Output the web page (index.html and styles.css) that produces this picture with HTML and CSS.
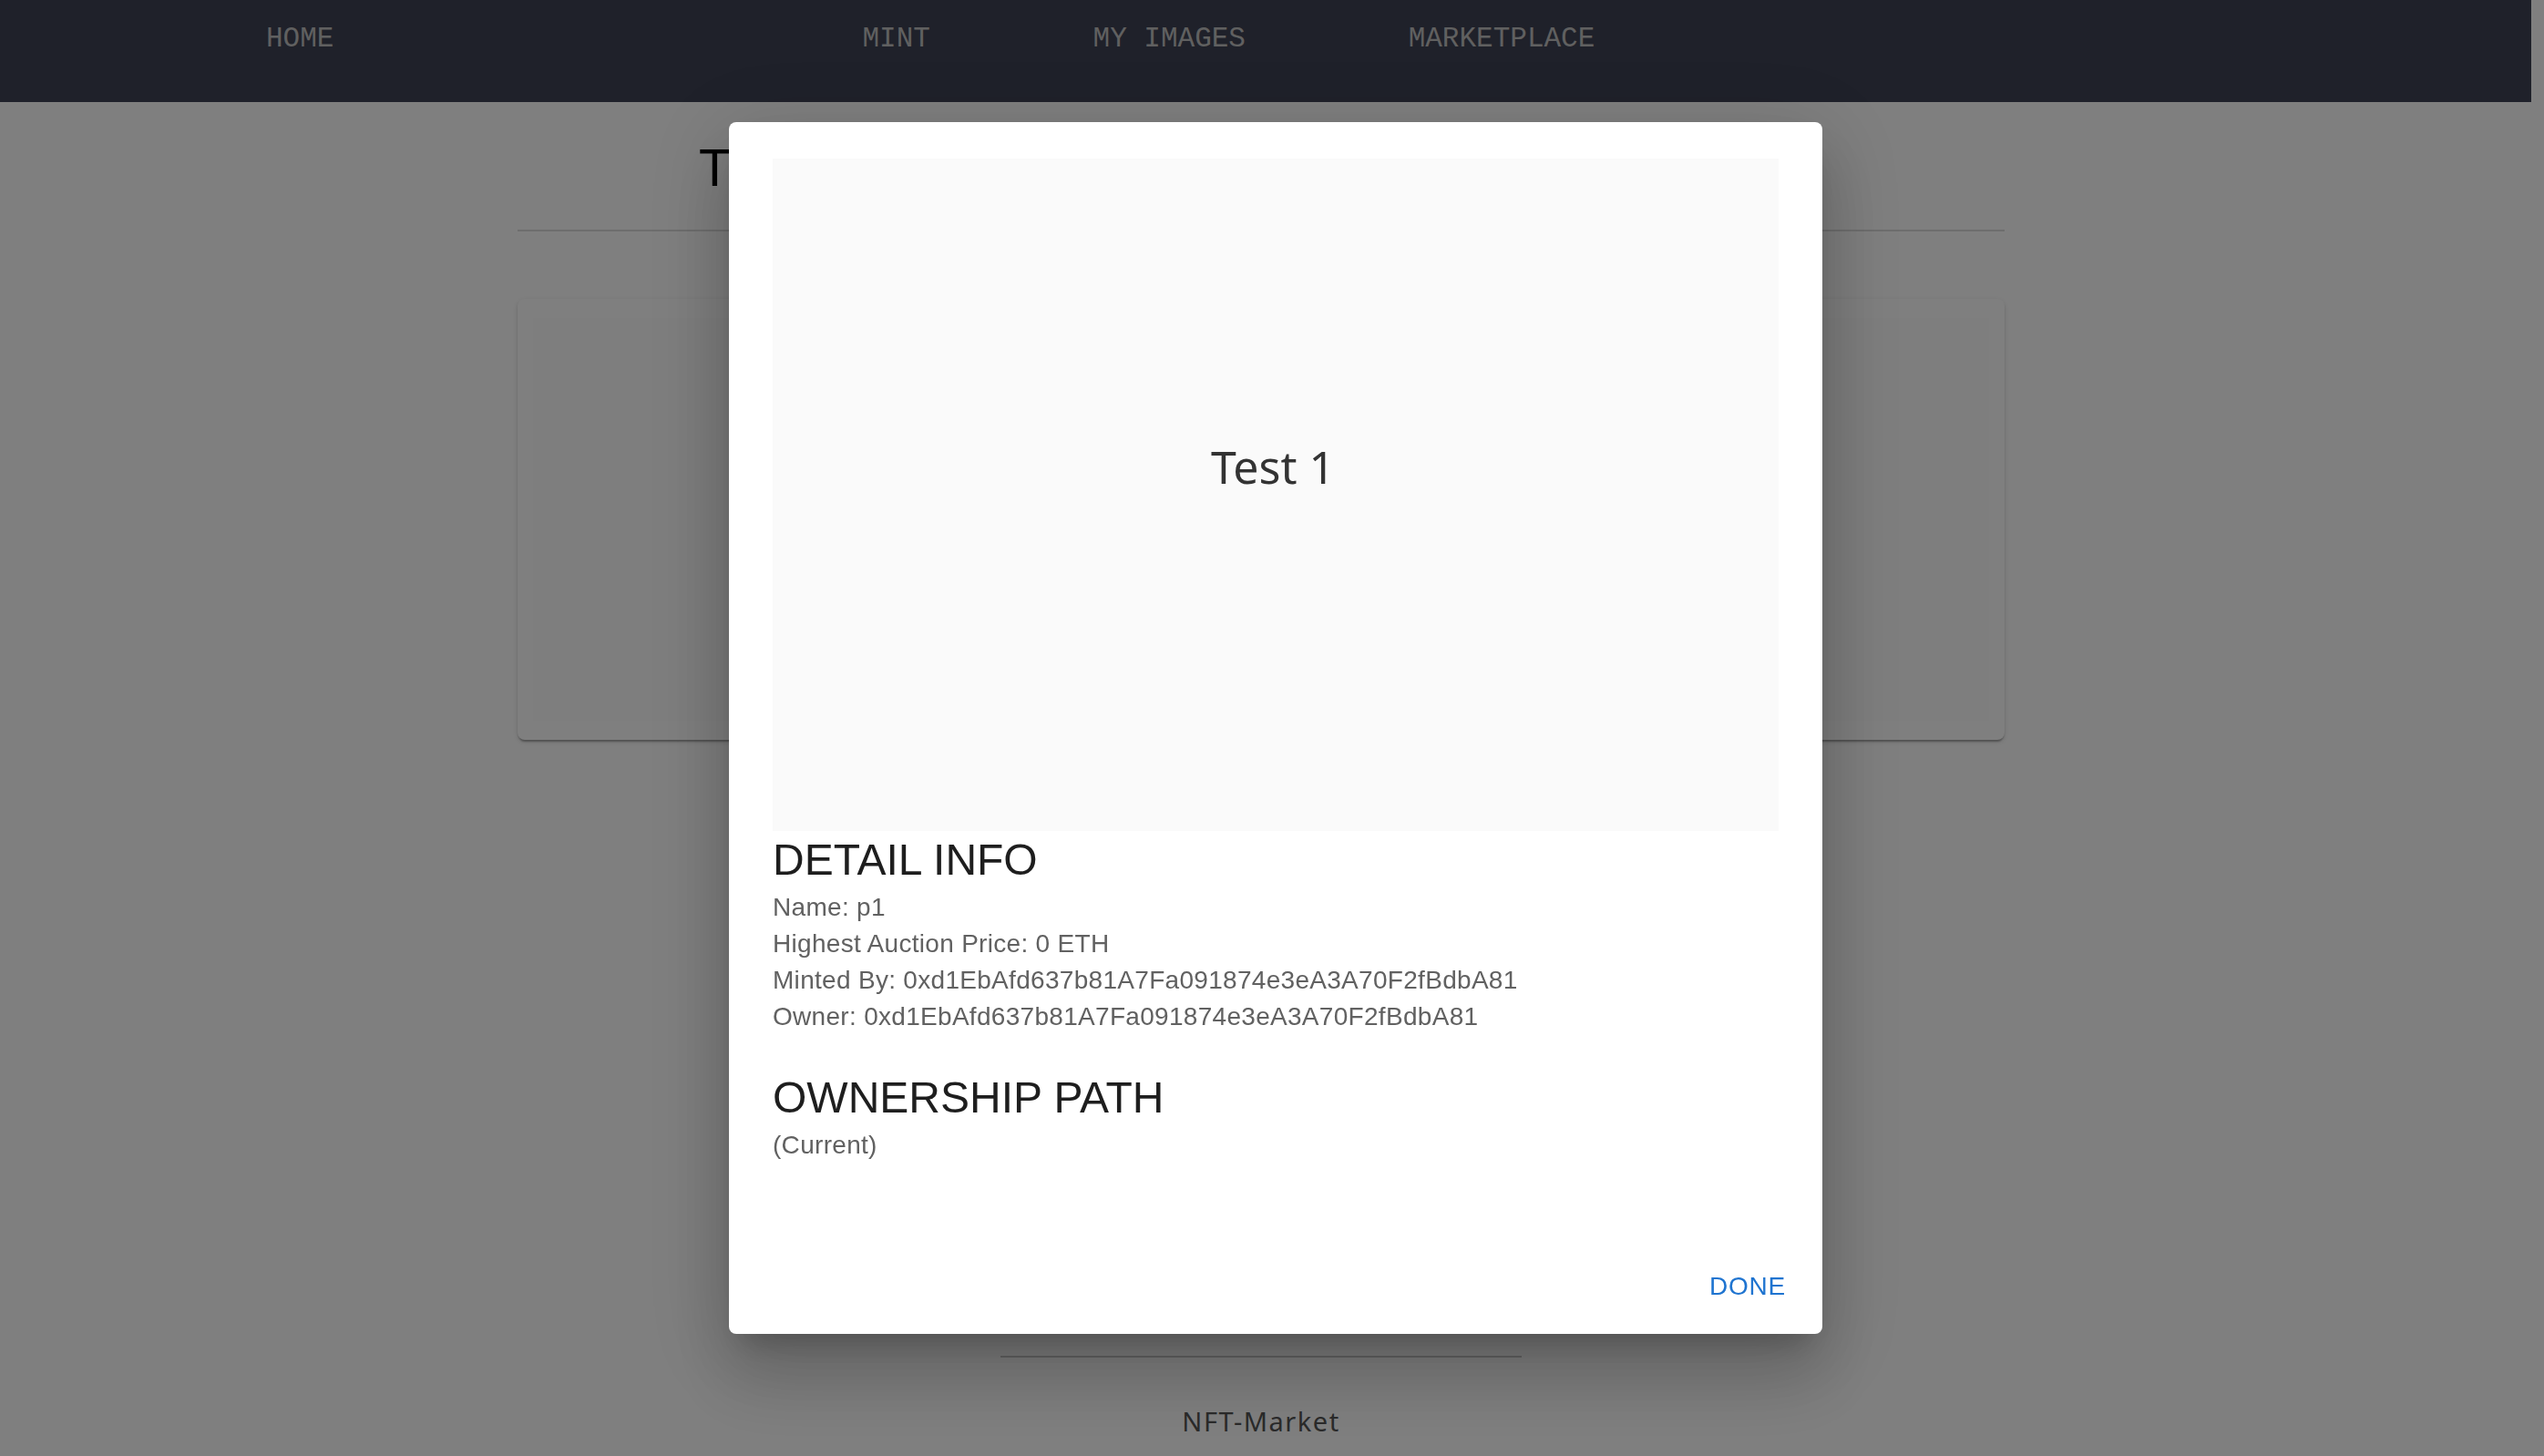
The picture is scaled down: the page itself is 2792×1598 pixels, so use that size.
FILE: index.html
```html
<!DOCTYPE html>
<html lang="en">
<head>
<meta charset="utf-8">
<title>NFT-Market</title>
<link rel="stylesheet" href="styles.css">
</head>
<body>
  <div class="page">
    <header class="nav">
      <a class="nav-link nav-home">HOME</a>
      <nav class="nav-links">
        <a class="nav-link">MINT</a>
        <a class="nav-link">MY IMAGES</a>
        <a class="nav-link">MARKETPLACE</a>
      </nav>
    </header>
    <main class="main">
      <h1 class="title">The Gallery</h1>
      <hr class="rule">
      <section class="card">
        <div class="card-media"></div>
      </section>
      <footer class="footer">
        <div class="footer-rule"></div>
        <p class="footer-text">NFT-Market</p>
      </footer>
    </main>
  </div>

  <div class="backdrop"></div>

  <div class="dialog-container">
    <div class="dialog" role="dialog">
      <div class="dialog-content">
        <div class="preview">Test 1</div>
        <h2 class="section-title">DETAIL INFO</h2>
        <p class="info-line">Name: p1</p>
        <p class="info-line">Highest Auction Price: 0 ETH</p>
        <p class="info-line">Minted By: 0xd1EbAfd637b81A7Fa091874e3eA3A70F2fBdbA81</p>
        <p class="info-line">Owner: 0xd1EbAfd637b81A7Fa091874e3eA3A70F2fBdbA81</p>
        <h2 class="section-title section-title-spaced">OWNERSHIP PATH</h2>
        <p class="info-line">(Current)</p>
      </div>
      <div class="dialog-actions">
        <button class="btn-text" type="button">DONE</button>
      </div>
    </div>
  </div>
</body>
</html>
```

FILE: styles.css
```css
html, body {
  margin: 0;
  padding: 0;
}

body {
  background: #ffffff;
  padding-right: 14px;
  height: 100vh;
  overflow: hidden;
  font-family: "Liberation Sans", Arial, sans-serif;
}

.page {
  width: 100%;
}

/* ---------- top navigation ---------- */
.nav {
  display: flex;
  align-items: flex-start;
  height: 112px;
  box-sizing: border-box;
  padding: 27px 0 0 292px;
  background: #3e4254;
}

.nav-link {
  font-family: "Courier New", "Nimbus Mono PS", "Liberation Mono", monospace;
  font-size: 31px;
  line-height: 31px;
  color: #c0c0c0;
  text-decoration: none;
  white-space: pre;
}

.nav-links {
  display: flex;
  gap: 178.7px;
  margin-left: 580px;
}

/* ---------- page body ---------- */
.main {
  width: 1632px;
  margin-left: 568px;
}

.title {
  margin: 38px 0 0;
  padding-left: 199px;
  font-size: 57px;
  line-height: 68px;
  font-weight: 400;
  color: #000;
}

.rule {
  margin: 34px 0 0;
  border: 0;
  height: 2px;
  background: #dcdcdc;
}

.card {
  margin-top: 74px;
  height: 484px;
  box-sizing: border-box;
  padding: 21px 17px;
  background: #fff;
  border-radius: 8px;
  box-shadow: 0 4px 2px -2px rgba(0,0,0,0.2), 0 2px 2px 0 rgba(0,0,0,0.14), 0 2px 6px 0 rgba(0,0,0,0.12);
}

.card-media {
  height: 100%;
  background: #fcfcfc;
}

.footer {
  margin-top: 676px;
  text-align: center;
}

.footer-rule {
  width: 572px;
  height: 2px;
  margin: 0 auto;
  background: #c8c8c8;
}

.footer-text {
  margin: 48px 0 0;
  font-family: "Noto Sans", "Open Sans", sans-serif;
  font-size: 29px;
  line-height: 43.5px;
  letter-spacing: 1.5px;
  color: #555;
}

/* ---------- modal ---------- */
.backdrop {
  position: fixed;
  inset: 0;
  background: rgba(0, 0, 0, 0.5);
}

.dialog-container {
  position: fixed;
  inset: 0;
  display: flex;
  align-items: center;
  justify-content: center;
}

.dialog {
  width: 1200px;
  margin-left: 8px;
  background: #fff;
  border-radius: 8px;
  box-shadow:
    0 22px 30px -14px rgba(0,0,0,0.2),
    0 48px 76px 6px rgba(0,0,0,0.14),
    0 18px 92px 16px rgba(0,0,0,0.12);
}

.dialog-content {
  padding: 40px 48px 82px;
}

.preview {
  height: 738px;
  box-sizing: border-box;
  padding: 313px 6px 0 0;
  background: #fafafa;
  text-align: center;
  font-family: "Noto Sans", "Open Sans", sans-serif;
  font-size: 50px;
  line-height: 50px;
  color: #333;
}

.section-title {
  margin: 0;
  font-size: 48px;
  line-height: 64px;
  font-weight: 400;
  color: #1e1e1e;
}

.section-title-spaced {
  margin-top: 37px;
}

.info-line {
  margin: 0;
  font-size: 28px;
  line-height: 40px;
  letter-spacing: 0.3px;
  color: #616161;
}

.dialog-actions {
  display: flex;
  justify-content: flex-end;
  padding: 16px;
}

.btn-text {
  border: 0;
  background: transparent;
  padding: 12px 24px;
  font-family: "Liberation Sans", Arial, sans-serif;
  font-size: 28px;
  line-height: 49px;
  letter-spacing: 0.8px;
  color: #1f74d0;
  cursor: pointer;
}
```
